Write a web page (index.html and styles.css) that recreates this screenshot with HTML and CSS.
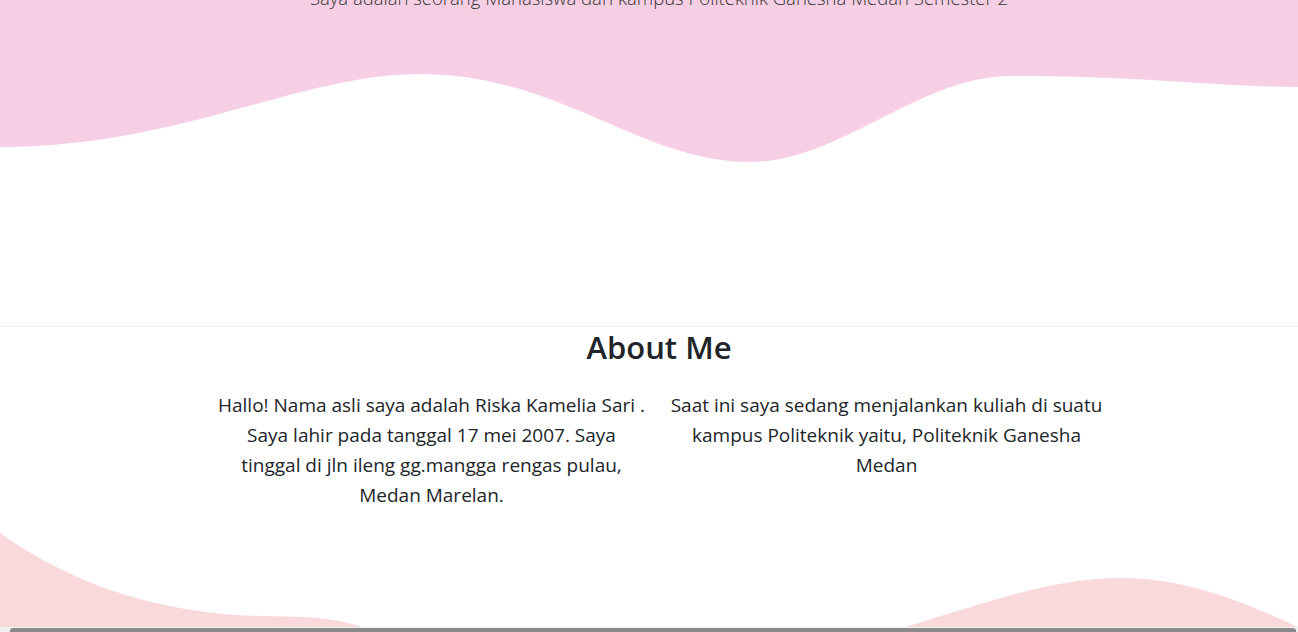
FILE: index.html
```html
<!DOCTYPE html>
<html lang="id">
<head>
<meta charset="utf-8">
<title>Riska Kamelia Sari</title>
<link rel="stylesheet" href="styles.css">
</head>
<body>
<div class="page">
  <section class="hero">
    <p class="hero-lead">Saya adalah seorang Mahasiswa dari kampus Politeknik Ganesha Medan Semester 2</p>
  </section>
  <svg class="wave-top" viewBox="0 0 1298 152" preserveAspectRatio="none" aria-hidden="true">
    <path fill="#f7cfe5" d="M0,0 L0,135 C180,135 300,62 420,62 C560,62 640,150 750,150 C840,150 920,64 1010,64 C1150,64 1200,74 1298,75 L1298,0 Z"/>
  </svg>
  <section class="about">
    <h2 class="about-title">About Me</h2>
    <div class="about-row">
      <div class="about-col">
        <p>Hallo! Nama asli saya adalah Riska Kamelia Sari . Saya lahir pada tanggal 17 mei 2007. Saya tinggal di jln ileng gg.mangga rengas pulau, Medan Marelan.</p>
      </div>
      <div class="about-col">
        <p>Saat ini saya sedang menjalankan kuliah di suatu kampus Politeknik yaitu, Politeknik Ganesha Medan</p>
      </div>
    </div>
  </section>
  <svg class="wave-bottom" viewBox="0 0 1298 117" preserveAspectRatio="none" aria-hidden="true">
    <path fill="#fad9dc" d="M0,23 C80,80 170,104 260,106 C300,107 330,106 362,117 L0,117 Z"/>
    <path fill="#fad9dc" d="M905,117 C980,95 1050,68 1120,68 C1190,68 1250,95 1298,117 Z"/>
  </svg>
</div>
<div class="hscroll"><div class="hscroll-thumb"></div></div>
</body>
</html>
```
FILE: styles.css
```css
html, body {
  margin: 0;
  padding: 0;
  overflow: hidden;
  background: #ffffff;
}

body {
  font-family: "Open Sans", "Noto Sans", sans-serif;
  color: #212529;
}

.page {
  margin-top: -16px;
}

.hero {
  background: #f7cfe5;
  padding-left: 20px;
}

.hero-lead {
  margin: 0;
  font-size: 18.5px;
  font-weight: 300;
  line-height: 28px;
  text-align: center;
  color: #333333;
}

.wave-top {
  display: block;
  width: 100%;
  height: 152px;
}

.about {
  margin-top: 162px;
  border-top: 1px solid #fde5f0;
  padding-left: 20px;
}

.about-title {
  margin: 0 0 24px;
  padding-top: 2px;
  font-size: 31px;
  font-weight: 600;
  line-height: 1.2;
  text-align: center;
}

.about-row {
  display: flex;
  justify-content: center;
}

.about-col {
  width: 455px;
  padding: 0 11.5px;
  box-sizing: border-box;
}

.about-col p {
  margin: 0;
  font-size: 19px;
  line-height: 30px;
  text-align: center;
}

.wave-bottom {
  display: block;
  width: 100%;
  height: 117px;
}

.hscroll {
  position: fixed;
  left: 0;
  right: 0;
  bottom: 0;
  height: 5px;
  background: #f1f1f1;
  display: flex;
}

.hscroll-thumb {
  flex: 1;
  margin: 1px 2px 0 10px;
  background: #8a8a8a;
  border-radius: 3px 3px 0 0;
}
```
